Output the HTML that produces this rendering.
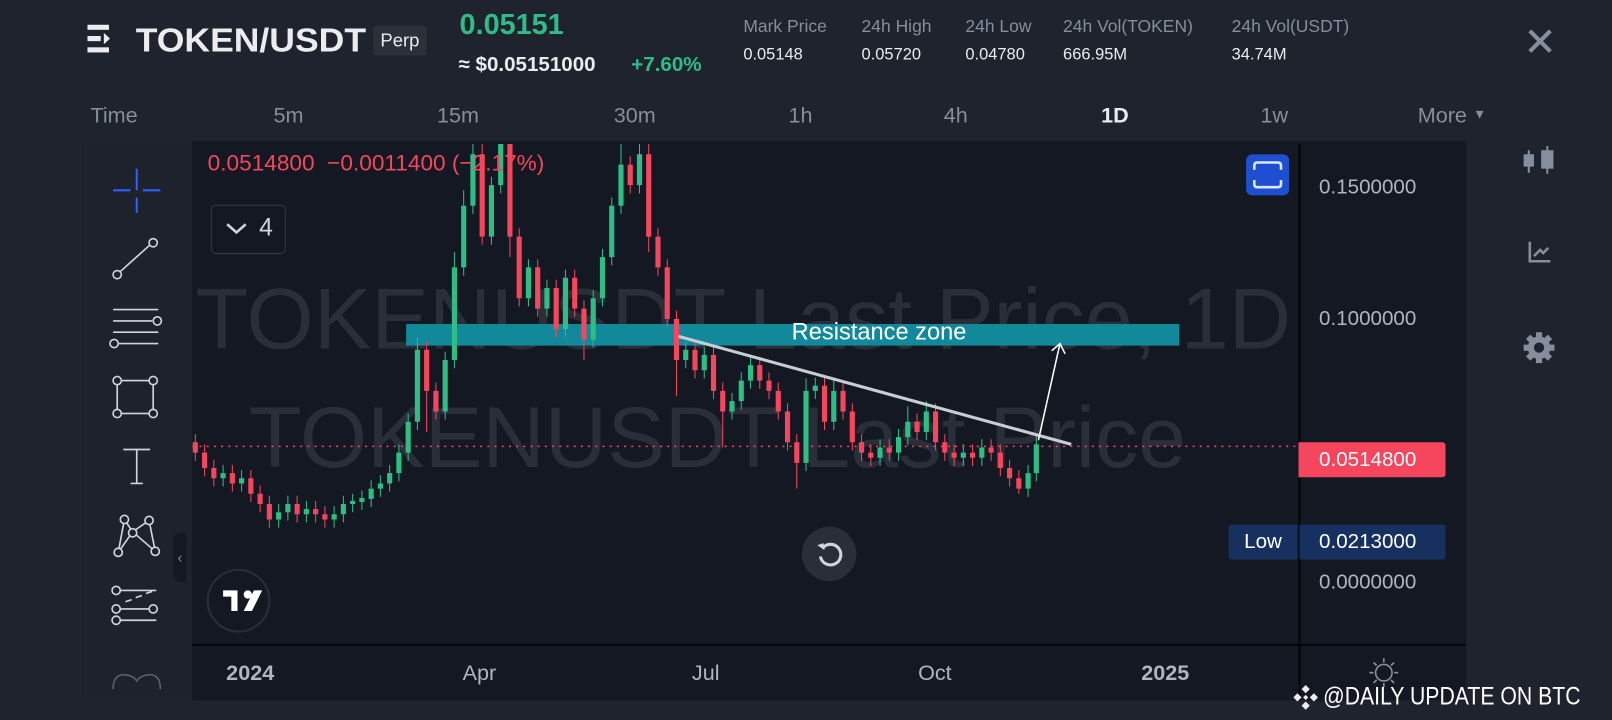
<!DOCTYPE html>
<html><head><meta charset="utf-8"><style>
*{margin:0;padding:0;box-sizing:border-box}
body{width:1612px;height:720px;background:#1f232d;font-family:"Liberation Sans",sans-serif;position:relative;overflow:hidden;color:#eaecef}
#w{position:absolute;left:0;top:0;width:1568px;height:700px;transform:scale(1.0281,1.0286);transform-origin:0 0}
.a{position:absolute;white-space:nowrap}
.lbl{color:#848e9c;font-size:17px}
.val{color:#eaecef;font-size:16px}
.tf{color:#848e9c;font-size:21px;top:101px}
.pa{color:#b2b5be;font-size:20px;left:1283px}
.ta{color:#b2b5be;font-size:21px;top:643px}
</style></head><body><div id="w">
<svg class="a" style="left:85px;top:24px" width="36" height="32"><rect x="0" y="0" width="21" height="5" fill="#eaecef"/><rect x="0" y="11" width="13" height="5" fill="#eaecef"/><polygon points="16,8 22,13.5 16,19" fill="#eaecef"/><rect x="0" y="22" width="21" height="5" fill="#eaecef"/></svg>
<div class="a" style="left:132px;top:21px;font-size:32px;font-weight:bold;color:#eaecef;transform:scaleX(1.08);transform-origin:0 0">TOKEN/USDT</div>
<div class="a" style="left:363px;top:25px;width:52px;height:29px;background:#2b3139;border-radius:3px;font-size:18px;color:#eaecef;text-align:center;line-height:29px">Perp</div>
<div class="a" style="left:447px;top:8px;font-size:28px;font-weight:bold;color:#2ebd85">0.05151</div>
<div class="a" style="left:446px;top:52px;font-size:20px;font-weight:bold;color:#eaecef">≈ $0.05151000</div>
<div class="a" style="left:614px;top:52px;font-size:20px;font-weight:bold;color:#2ebd85">+7.60%</div>
<div class="a lbl" style="left:723px;top:16px">Mark Price</div><div class="a val" style="left:723px;top:45px">0.05148</div>
<div class="a lbl" style="left:838px;top:16px">24h High</div><div class="a val" style="left:838px;top:45px">0.05720</div>
<div class="a lbl" style="left:939px;top:16px">24h Low</div><div class="a val" style="left:939px;top:45px">0.04780</div>
<div class="a lbl" style="left:1034px;top:16px">24h Vol(TOKEN)</div><div class="a val" style="left:1034px;top:45px">666.95M</div>
<div class="a lbl" style="left:1198px;top:16px">24h Vol(USDT)</div><div class="a val" style="left:1198px;top:45px">34.74M</div>
<svg class="a" style="left:1486px;top:28px" width="24" height="24"><path d="M2 2L22 22M22 2L2 22" stroke="#848e9c" stroke-width="4"/></svg>
<div class="a tf" style="left:88px">Time</div>
<div class="a tf" style="left:266px">5m</div>
<div class="a tf" style="left:425px">15m</div>
<div class="a tf" style="left:597px">30m</div>
<div class="a tf" style="left:767px">1h</div>
<div class="a tf" style="left:918px">4h</div>
<div class="a tf" style="left:1071px;color:#eaecef;font-weight:bold">1D</div>
<div class="a tf" style="left:1226px">1w</div>
<div class="a tf" style="left:1379px">More <span style="font-size:13px;position:relative;top:-4px">▼</span></div>
<div class="a" style="left:80px;top:137px;width:1346px;height:544px;background:#141823"></div>
<div class="a" style="left:80px;top:137px;width:107px;height:544px;background:#1e222d"></div>
<div class="a" style="left:1263px;top:140px;width:2px;height:541px;background:#050608"></div>
<div class="a" style="left:187px;top:626px;width:1239px;height:2px;background:#050608"></div>
<div class="a" style="left:190px;top:262px;font-size:84px;color:#2a2e39">TOKENUSDT Last Price, 1D</div>
<div class="a" style="left:242px;top:377px;font-size:84px;color:#2a2e39">TOKENUSDT Last Price</div>
<div class="a" style="left:395px;top:315px;width:752px;height:21px;background:#11899b"></div>
<div class="a" style="left:770px;top:309px;font-size:23px;color:#fff">Resistance zone</div>
<svg class="a" style="left:187px;top:140px" width="1076" height="486" viewBox="187 140 1076 486">
<line x1="187" y1="434" x2="1263" y2="434" stroke="#f6465d" stroke-width="1.5" stroke-dasharray="2 5"/>
<g stroke="#2ebd85"><path stroke-width="1" d="M217 452V473 M235 457V478 M271 490V513 M280 482V506 M298 487V508 M325 492V513 M334 482V508 M343 480V498 M352 477V496 M361 467V493 M370 462V483 M379 452V478 M388 432V468 M397 402V448 M406 328V418 M433 342V408 M442 245V358 M451 185V268 M460 130V208 M478 172V238 M487 130V188 M514 252V298 M532 272V308 M550 262V328 M577 282V338 M586 242V298 M595 192V258 M604 140V208 M622 130V188 M667 332V358 M685 337V368 M712 382V408 M721 362V398 M730 347V378 M784 368V458 M793 367V388 M811 368V418 M856 427V453 M874 417V448 M883 395V433 M901 390V428 M937 432V453 M955 427V453 M1000 452V483 M1008 422V468"/>
<path stroke-width="5" d="M217 460V465 M235 465V470 M271 498V505 M280 490V498 M298 495V500 M325 500V505 M334 490V500 M343 487V490 M352 484V488 M361 475V485 M370 470V475 M379 460V470 M388 440V460 M397 410V440 M406 340V410 M433 350V400 M442 260V350 M451 200V260 M460 150V200 M478 180V230 M487 140V180 M514 260V290 M532 280V300 M550 270V320 M577 290V330 M586 250V290 M595 200V250 M604 160V200 M622 150V180 M667 340V350 M685 345V360 M712 390V400 M721 370V390 M730 355V370 M784 380V450 M793 375V380 M811 380V410 M856 435V445 M874 425V440 M883 410V425 M901 400V420 M937 440V445 M955 435V445 M1000 460V475 M1008 432V460"/></g>
<g stroke="#f6465d"><path stroke-width="1" d="M190 422V448 M199 432V463 M208 447V473 M226 452V478 M244 457V488 M253 472V498 M262 482V513 M289 482V508 M307 487V508 M316 492V513 M415 332V420 M424 372V408 M469 130V238 M496 130V250 M505 222V298 M523 252V308 M541 272V328 M559 262V308 M568 292V350 M613 152V188 M631 130V245 M640 222V268 M649 252V318 M658 302V385 M676 332V368 M694 337V388 M703 372V435 M739 347V378 M748 362V388 M757 372V408 M766 392V438 M775 422V475 M802 367V418 M820 372V408 M829 392V438 M838 422V448 M847 432V453 M865 427V448 M892 402V428 M910 392V438 M919 422V448 M928 432V453 M946 432V453 M964 427V448 M973 432V463 M982 447V473 M991 457V480"/>
<path stroke-width="5" d="M190 430V440 M199 440V455 M208 455V465 M226 460V470 M244 465V480 M253 480V490 M262 490V505 M289 490V500 M307 495V500 M316 500V505 M415 340V380 M424 380V400 M469 150V230 M496 140V230 M505 230V290 M523 260V300 M541 280V320 M559 270V300 M568 300V330 M613 160V180 M631 150V230 M640 230V260 M649 260V310 M658 310V350 M676 340V360 M694 345V380 M703 380V400 M739 355V370 M748 370V380 M757 380V400 M766 400V430 M775 430V450 M802 375V410 M820 380V400 M829 400V430 M838 430V440 M847 440V445 M865 435V440 M892 410V420 M910 400V430 M919 430V440 M928 440V445 M946 440V445 M964 435V440 M973 440V455 M982 455V465 M991 465V475"/></g>
<line x1="660" y1="327" x2="1042" y2="432" stroke="#c9ccd3" stroke-width="3"/>
<path d="M1010 428L1031 334M1023 341L1031 334L1036 344" stroke="#fff" stroke-width="1.5" fill="none"/>
</svg>
<div class="a" style="left:202px;top:146px;font-size:22px;color:#f6465d">0.0514800 &nbsp;−0.0011400 (−2.17%)</div>
<div class="a" style="left:205px;top:199px;width:73px;height:48px;border:1.5px solid #363a45;border-radius:5px"></div>
<svg class="a" style="left:219px;top:215px" width="22" height="14"><path d="M2 3L11 11L20 3" stroke="#d1d4dc" stroke-width="2.5" fill="none"/></svg>
<div class="a" style="left:252px;top:208px;font-size:24px;color:#d1d4dc">4</div>
<svg class="a" style="left:1212px;top:150px" width="42" height="40"><rect width="42" height="40" rx="6" fill="#1f4fd1"/><path d="M8 15V11Q8 8 11 8H31Q34 8 34 11V15M8 25V29Q8 32 11 32H31Q34 32 34 29V25" stroke="#dfe6ff" stroke-width="2.5" fill="none"/></svg>
<div class="a" style="left:780px;top:512px;width:53px;height:53px;border-radius:50%;background:#2a2e39"></div>
<svg class="a" style="left:792px;top:524px" width="30" height="30"><path d="M8 9A10 10 0 1 1 6 17" stroke="#d1d4dc" stroke-width="3" fill="none"/><path d="M3 6L9 4L10 11Z" fill="#d1d4dc"/></svg>
<div class="a" style="left:201px;top:553px;width:62px;height:62px;border-radius:50%;border:2px solid #2a2e39"></div>
<svg class="a" style="left:216px;top:573px" width="40" height="22"><path d="M1 1H15V21H9V7H1Z" fill="#fff"/><circle cx="25" cy="5" r="4" fill="#fff"/><path d="M31 1H39L29 21H21Z" fill="#fff"/></svg>
<svg class="a" style="left:80px;top:140px" width="107" height="541" fill="none" stroke="#d1d4dc" stroke-width="1.6">
<path d="M53 24V45M53 52V67M30 45H47M59 45H76" stroke="#2962ff" stroke-width="2"/>
<line x1="37" y1="124" x2="66" y2="98"/><circle cx="34" cy="127" r="4"/><circle cx="69" cy="96" r="4"/>
<path d="M30 161H74M30 172H68M30 183H74M35 194H74"/><circle cx="73" cy="172" r="4"/><circle cx="31" cy="194" r="4"/>
<rect x="34" y="230" width="35" height="32"/><circle cx="34" cy="230" r="4" fill="#1e222d"/><circle cx="69" cy="230" r="4" fill="#1e222d"/><circle cx="34" cy="262" r="4" fill="#1e222d"/><circle cx="69" cy="262" r="4" fill="#1e222d"/>
<path d="M40 297H66M53 297V330M47 330H59"/>
<path d="M35 397L41 365L49 377L65 366L71 396L49 377Z"/><circle cx="41" cy="365" r="4" fill="#1e222d"/><circle cx="65" cy="366" r="4" fill="#1e222d"/><circle cx="49" cy="378" r="4" fill="#1e222d"/><circle cx="35" cy="397" r="4" fill="#1e222d"/><circle cx="71" cy="396" r="4" fill="#1e222d"/>
<path d="M37 434H72M37 452H65M37 463H72M42 445L48 443M52 441L58 439M62 437L68 435"/><circle cx="33" cy="434" r="4"/><circle cx="33" cy="452" r="4"/><circle cx="69" cy="452" r="4"/><circle cx="33" cy="463" r="4"/>
<path d="M30 530Q30 515 42 516Q50 517 53 522Q56 517 64 516Q76 515 76 530" stroke="#5a5f6b"/>
</svg>
<div class="a" style="left:169px;top:518px;width:12px;height:48px;background:#141823;border-radius:6px 0 0 6px;color:#848e9c;font-size:14px;line-height:48px;text-align:center">‹</div>
<div class="a pa" style="top:171px">0.1500000</div>
<div class="a pa" style="top:299px">0.1000000</div>
<div class="a pa" style="top:555px">0.0000000</div>
<div class="a" style="left:1263px;top:430px;width:143px;height:34px;background:#f6465d;border-radius:0 3px 3px 0;color:#fff;font-size:20px;line-height:34px;padding-left:20px">0.0514800</div>
<div class="a" style="left:1195px;top:510px;width:67px;height:34px;background:#16305f;border-radius:3px 0 0 3px;color:#fff;font-size:20px;line-height:34px;text-align:center">Low</div>
<div class="a" style="left:1264px;top:510px;width:142px;height:34px;background:#16305f;border-radius:0 3px 3px 0;color:#fff;font-size:20px;line-height:34px;padding-left:19px">0.0213000</div>
<div class="a ta" style="left:220px;font-weight:bold">2024</div>
<div class="a ta" style="left:450px">Apr</div>
<div class="a ta" style="left:673px">Jul</div>
<div class="a ta" style="left:893px">Oct</div>
<div class="a ta" style="left:1110px;font-weight:bold">2025</div>
<svg class="a" style="left:1330px;top:638px" width="32" height="32" stroke="#848e9c" stroke-width="1.6" fill="none"><circle cx="16" cy="16" r="8"/><path d="M16 2V6M16 26V30M2 16H6M26 16H30M6 6L9 9M23 23L26 26M6 26L9 23M23 9L26 6"/></svg>
<svg class="a" style="left:1480px;top:140px" width="36" height="36" fill="#848e9c"><rect x="2" y="10" width="10" height="12"/><rect x="6" y="6" width="2" height="22"/><rect x="19" y="6" width="12" height="18"/><rect x="24" y="2" width="2" height="27"/></svg>
<svg class="a" style="left:1486px;top:233px" width="24" height="24" stroke="#848e9c" stroke-width="2.5" fill="none"><path d="M2 2V21H22M6 16L12 10L15 13L20 8"/></svg>
<svg class="a" style="left:1481px;top:322px" width="32" height="32"><g fill="#848e9c" transform="translate(16 16)"><circle r="11"/><rect x="-3" y="-15" width="6" height="30"/><rect x="-3" y="-15" width="6" height="30" transform="rotate(45)"/><rect x="-3" y="-15" width="6" height="30" transform="rotate(90)"/><rect x="-3" y="-15" width="6" height="30" transform="rotate(135)"/></g><circle cx="16" cy="16" r="5" fill="#1f232d"/></svg>
<svg class="a" style="left:1257px;top:665px" width="26" height="26" fill="#eaecef"><path d="M13 1L17 5L13 9L9 5Z M5 9L9 13L5 17L1 13Z M21 9L25 13L21 17L17 13Z M13 17L17 21L13 25L9 21Z M13 10.5L15.5 13L13 15.5L10.5 13Z"/></svg>
<div class="a" style="left:1287px;top:664px;font-size:24px;color:#fff;transform:scaleX(0.86);transform-origin:0 0">@DAILY UPDATE ON BTC</div>
</div></body></html>
